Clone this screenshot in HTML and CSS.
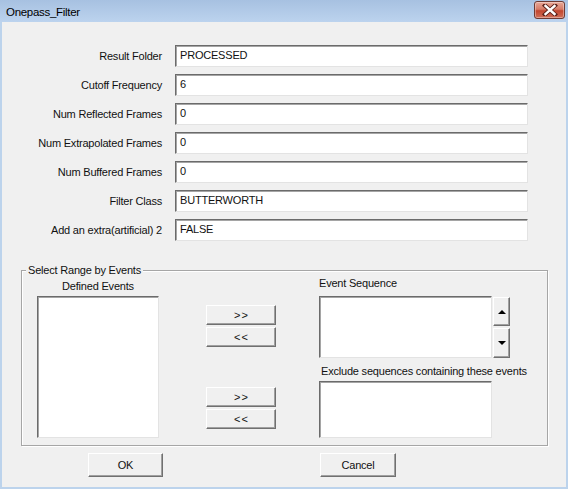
FILE: index.html
```html
<!DOCTYPE html>
<html>
<head>
<meta charset="utf-8">
<link rel="stylesheet" href="styles.css">
</head>
<body>
<div class="window">
  <div class="titlebar">
    <span class="title">Onepass_Filter</span>
    <div class="close">
      <svg width="16" height="12" viewBox="0 0 16 12">
        <path d="M3 1.5 L13 10.5 M13 1.5 L3 10.5" stroke="#5a2018" stroke-width="4.2" stroke-linecap="square"/>
        <path d="M3.5 2 L12.5 10 M12.5 2 L3.5 10" stroke="#ffffff" stroke-width="2.4" stroke-linecap="square"/>
      </svg>
    </div>
  </div>

  <div class="form">
    <label class="lbl">Result Folder</label><div class="field">PROCESSED</div>
    <label class="lbl">Cutoff Frequency</label><div class="field">6</div>
    <label class="lbl">Num Reflected Frames</label><div class="field">0</div>
    <label class="lbl">Num Extrapolated Frames</label><div class="field">0</div>
    <label class="lbl">Num Buffered Frames</label><div class="field">0</div>
    <label class="lbl">Filter Class</label><div class="field">BUTTERWORTH</div>
    <label class="lbl">Add an extra(artificial) 2</label><div class="field">FALSE</div>
  </div>

  <div class="group">
    <span class="legend">Select Range by Events</span>
    <div class="col-defined">
      <div class="cap center">Defined Events</div>
      <div class="list list-defined"></div>
    </div>
    <div class="col-buttons">
      <div class="pair pair-top">
        <div class="btn small">&gt;&gt;</div>
        <div class="btn small">&lt;&lt;</div>
      </div>
      <div class="pair pair-bottom">
        <div class="btn small">&gt;&gt;</div>
        <div class="btn small">&lt;&lt;</div>
      </div>
    </div>
    <div class="col-seq">
      <div class="cap seq-cap">Event Sequence</div>
      <div class="seq-row">
        <div class="list list-seq"></div>
        <div class="spin">
          <div class="btn arrow up"><span class="tri-up"></span></div>
          <div class="btn arrow down"><span class="tri-down"></span></div>
        </div>
      </div>
      <div class="cap excl-cap">Exclude sequences containing these events</div>
      <div class="list list-excl"></div>
    </div>
  </div>

  <div class="footer">
    <div class="btn ok">OK</div>
    <div class="btn cancel">Cancel</div>
  </div>
</div>
</body>
</html>
```

FILE: styles.css
```css
html, body {
  margin: 0;
  padding: 0;
  background: #f0f0f0;
}
body {
  font-family: "Liberation Sans", Arial, sans-serif;
  font-size: 11px;
  letter-spacing: -0.2px;
  color: #111;
}
.window {
  box-sizing: border-box;
  width: 568px;
  height: 489px;
  background: #f0f0f0;
  border-left: 2px solid #bcd3ec;
  border-right: 2px solid #bcd3ec;
  border-bottom: 2px solid #bcd3ec;
}
.titlebar {
  height: 22px;
  margin: 0 -2px;
  padding-left: 6px;
  display: flex;
  align-items: center;
  justify-content: space-between;
  background: linear-gradient(#a7c1e1, #bcd3ee);
}
.title {
  font-size: 11.5px;
  letter-spacing: -0.3px;
  color: #000;
  padding-top: 1px;
}
.close {
  box-sizing: border-box;
  width: 31px;
  height: 18px;
  margin-right: 3px;
  margin-top: -2px;
  border: 1px solid #6e3a33;
  border-radius: 3px;
  background: linear-gradient(#e8a898 0%, #d67b67 45%, #c2462f 55%, #d0705a 100%);
  box-shadow: inset 0 0 0 1px rgba(255,255,255,0.35);
  display: flex;
  align-items: center;
  justify-content: center;
}
.close svg { display: block; }

.form {
  display: grid;
  grid-template-columns: 160px 353px;
  column-gap: 13px;
  row-gap: 7px;
  padding-top: 23px;
}
.lbl {
  text-align: right;
  align-self: center;
  white-space: nowrap;
}
.field {
  box-sizing: border-box;
  height: 22px;
  background: #fff;
  border: 1px solid;
  border-color: #6b6b6b #e3e3e3 #e3e3e3 #6b6b6b;
  box-shadow: inset 1px 1px 0 #a5a5a5;
  padding: 2px 0 0 4px;
  line-height: 14px;
}

.group {
  position: relative;
  box-sizing: border-box;
  margin: 29px 0 0 19px;
  width: 527px;
  height: 176px;
  border: 1px solid #a6a6a6;
  box-shadow: inset 1px 1px 0 #fff, 1px 1px 0 #fff;
  display: flex;
}
.legend {
  position: absolute;
  left: 4px;
  top: -8px;
  padding: 0 2px;
  background: #f0f0f0;
  line-height: 14px;
}
.cap {
  line-height: 14px;
  white-space: nowrap;
}
.center { text-align: center; }
.list {
  box-sizing: border-box;
  background: #fff;
  border: 1px solid;
  border-color: #6b6b6b #e3e3e3 #e3e3e3 #6b6b6b;
  box-shadow: inset 1px 1px 0 #a5a5a5;
}
.col-defined {
  margin-left: 15px;
  width: 122px;
  padding-top: 8px;
}
.list-defined {
  margin-top: 3px;
  height: 142px;
}
.col-buttons {
  margin-left: 47px;
  width: 70px;
  padding-top: 34px;
}
.pair {
  display: flex;
  flex-direction: column;
  gap: 2px;
}
.pair-bottom { margin-top: 40px; }
.btn {
  box-sizing: border-box;
  background: #f0f0f0;
  border: 1px solid;
  border-color: #ffffff #707070 #707070 #ffffff;
  box-shadow: inset -1px -1px 0 #a0a0a0;
  display: flex;
  align-items: center;
  justify-content: center;
}
.btn.small {
  height: 20px;
  letter-spacing: 1px;
  padding-left: 1px;
}
.col-seq {
  margin-left: 42px;
  padding-top: 5px;
}
.seq-cap { padding-left: 1px; }
.seq-row {
  display: flex;
  margin-top: 6px;
  margin-left: 1px;
}
.list-seq {
  width: 173px;
  height: 62px;
}
.spin {
  margin-left: 1px;
  display: flex;
  flex-direction: column;
  gap: 2px;
  padding-top: 1px;
}
.btn.arrow {
  width: 17px;
  height: 29px;
}
.btn.arrow.down { height: 30px; }
.tri-up {
  width: 0; height: 0;
  border-left: 4px solid transparent;
  border-right: 4px solid transparent;
  border-bottom: 4px solid #000;
}
.tri-down {
  width: 0; height: 0;
  border-left: 4px solid transparent;
  border-right: 4px solid transparent;
  border-top: 4px solid #000;
}
.excl-cap {
  margin-top: 6px;
  padding-left: 3px;
}
.list-excl {
  margin-top: 3px;
  margin-left: 1px;
  width: 173px;
  height: 57px;
}

.footer {
  display: flex;
  margin-top: 7px;
}
.btn.ok {
  margin-left: 86px;
  width: 75px;
  height: 24px;
}
.btn.cancel {
  margin-left: 157px;
  width: 76px;
  height: 24px;
}
```
